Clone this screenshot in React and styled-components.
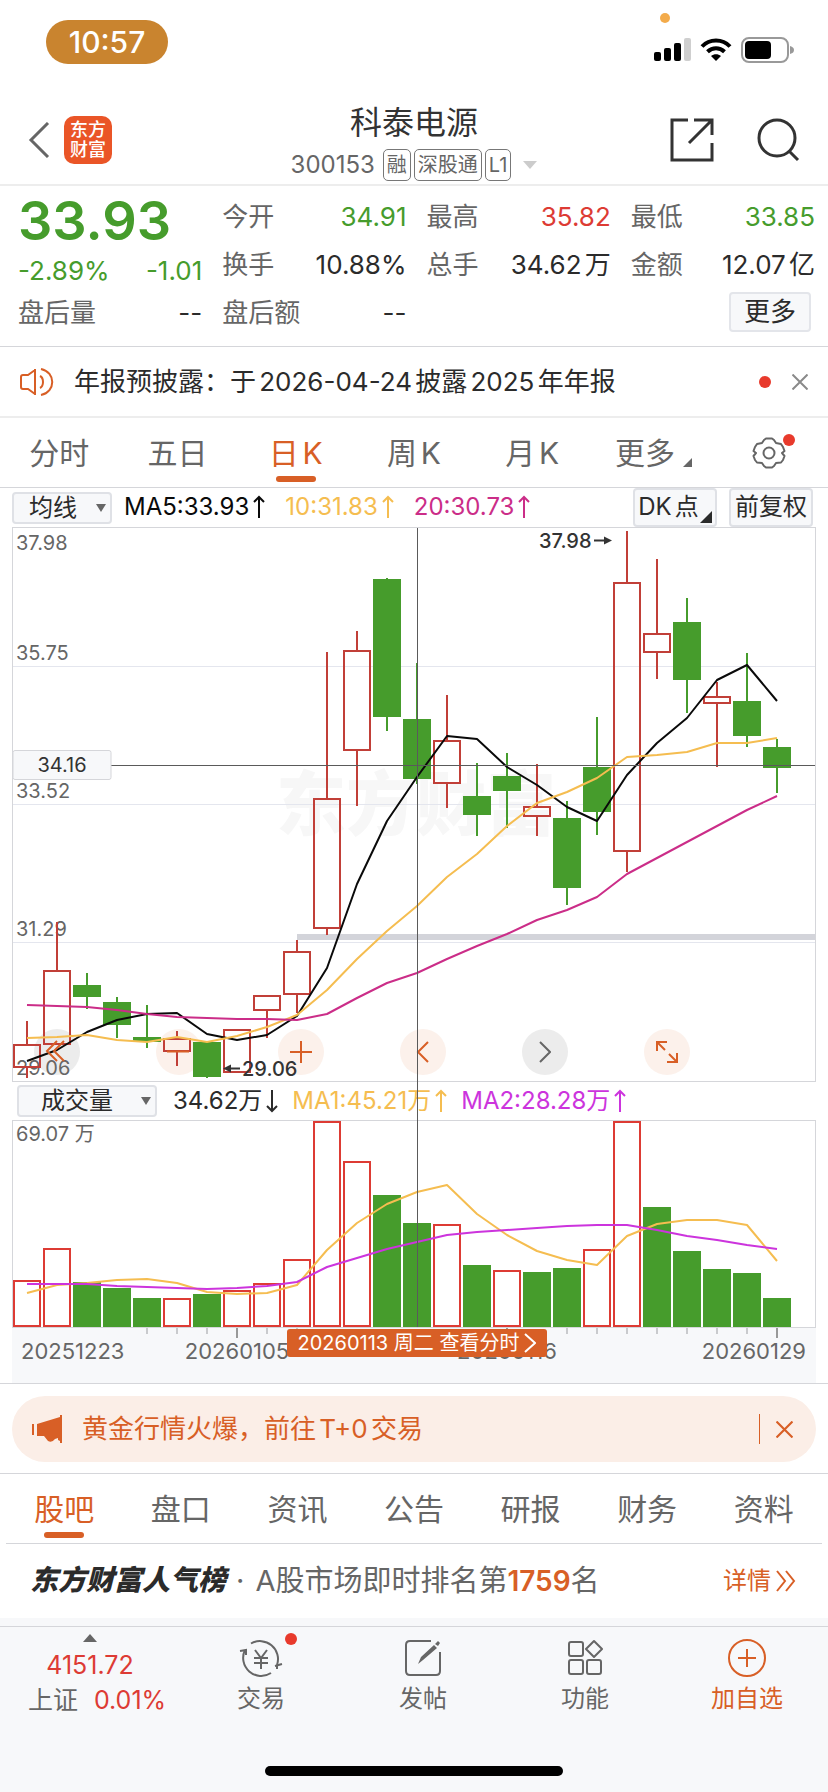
import React, { useState } from 'react';
import styled, { createGlobalStyle } from 'styled-components';

const c = {
  orange: '#d85f26',
  green: '#469c2c',
  red: '#dd3b34',
  candleRed: '#c13f38',
  yellow: '#f5bd50',
  magenta: '#cb2d88',
  purple: '#cc34dd',
  ink: '#2b2b2b',
  gray: '#666666',
  line: '#d5d6da',
  soft: '#ededed',
  panel: '#f7f8fa',
};

const Global = createGlobalStyle`
  * { box-sizing: border-box; }
  body { margin: 0; background: #fff; line-height: 1.2; }
  body, button, select {
    font-family: Inter, 'Noto Sans CJK SC', sans-serif;
    text-autospace: normal;
  }
  button { border: 0; background: none; padding: 0; margin: 0; color: inherit; font-size: inherit; line-height: inherit; cursor: pointer; }
  a { text-decoration: none; color: inherit; }
  h1, p { margin: 0; font-weight: 400; }
  svg { display: block; flex: none; }
`;

const Page = styled.main`
  min-height: 100vh;
  display: flex;
  flex-direction: column;
  color: ${c.ink};
  white-space: nowrap;
`;

/* status bar */
const StatusBar = styled.div`
  height: 84px;
  display: flex;
  align-items: center;
  justify-content: space-between;
  padding: 0 34px 0 46px;
  position: relative;
`;
const TimePill = styled.div`
  width: 122px;
  height: 44px;
  border-radius: 22px;
  background: #c9842f;
  color: #fff;
  font-size: 30px;
  font-weight: 500;
  line-height: 44px;
  text-align: center;
`;
const StatusIcons = styled.div`
  display: flex;
  align-items: center;
  gap: 9px;
  padding-top: 15px;
`;
const RecordDot = styled.span`
  position: absolute;
  top: 13px;
  right: 158px;
  width: 10px;
  height: 10px;
  border-radius: 5px;
  background: #f3ab4b;
`;

/* title bar */
const TitleBar = styled.header`
  display: grid;
  grid-template-columns: 1fr auto 1fr;
  height: 102px;
  padding: 0 28px;
  border-bottom: 2px solid ${c.soft};
`;
const BarSide = styled.div`
  display: flex;
  align-items: center;
  justify-content: ${(p) => (p.$end ? 'flex-end' : 'flex-start')};
  gap: ${(p) => (p.$end ? 42 : 14)}px;
  padding-top: 12px;
`;
const Logo = styled.span`
  width: 48px;
  height: 48px;
  border-radius: 10px;
  background: #ea5527;
  color: #fff;
  display: flex;
  flex-direction: column;
  align-items: center;
  justify-content: center;
  font-size: 18px;
  font-weight: 500;
  line-height: 20px;
`;
const TitleBlock = styled.div`
  display: flex;
  flex-direction: column;
  align-items: center;
  padding-top: 18px;
`;
const StockName = styled.h1`
  font-size: 32px;
  line-height: 42px;
  color: #333;
`;
const CodeRow = styled.div`
  display: flex;
  align-items: center;
  gap: 3px;
  margin-top: 5px;
  color: ${c.gray};
  font-size: 24px;
  line-height: 32px;
`;
const Tag = styled.span`
  height: 32px;
  padding: 0 3px;
  border: 1px solid #777;
  border-radius: 5px;
  font-size: 20px;
  line-height: 30px;
`;
const Triangle = styled.span`
  width: 0;
  height: 0;
  flex: none;
  border-left: ${(p) => p.$w}px solid transparent;
  border-right: ${(p) => p.$w}px solid transparent;
  ${(p) => (p.$up ? 'border-bottom' : 'border-top')}: ${(p) => p.$h}px solid ${(p) => p.$color};
`;
const Gap = styled.span`
  width: ${(p) => p.$w}px;
`;

/* quote */
const Quote = styled.section`
  display: grid;
  grid-template-columns: repeat(4, 1fr);
  column-gap: 20px;
  padding: 7px 13px 9px 18px;
  border-bottom: 1px solid ${c.line};
`;
const QuoteColumn = styled.div`
  display: flex;
  flex-direction: column;
`;
const BigPrice = styled.div`
  height: 56px;
  font-size: 54px;
  line-height: 56px;
  font-weight: 600;
  color: ${c.green};
`;
const QuoteRow = styled.div`
  display: flex;
  justify-content: space-between;
  align-items: center;
  height: ${(p) => p.$h || 48}px;
  font-size: 26px;
  color: ${(p) => p.$color || c.ink};
`;
const QuoteLabel = styled.span`
  color: ${c.gray};
`;
const MoreButton = styled.button`
  align-self: flex-end;
  width: 82px;
  height: 40px;
  margin: 3px 4px 0 0;
  border: 2px solid #e3e5ea;
  border-radius: 4px;
  background: ${c.panel};
  font-size: 26px;
`;

/* notice */
const Notice = styled.section`
  display: flex;
  align-items: center;
  height: 71px;
  padding: 0 20px;
  border-bottom: 2px solid ${c.soft};
  font-size: 26px;
`;
const NoticeText = styled.p`
  flex: 1;
  padding-left: 20px;
`;
const Dot = styled.span`
  width: 12px;
  height: 12px;
  border-radius: 6px;
  background: #e83a2c;
  flex: none;
`;
const CloseButton = styled.button`
  margin-left: ${(p) => p.$gap}px;
`;

/* tabs */
const Tabs = styled.nav`
  display: grid;
  grid-template-columns: repeat(7, 1fr);
  height: 70px;
  margin: 0 ${(p) => p.$inset || 0}px;
  border-bottom: 1px solid ${c.line};
`;
const Tab = styled.button`
  position: relative;
  display: flex;
  align-items: center;
  justify-content: center;
  font-size: 30px;
  color: ${(p) => (p.$active ? c.orange : c.gray)};
  &::after {
    content: '';
    display: ${(p) => (p.$active ? 'block' : 'none')};
    position: absolute;
    bottom: 5px;
    left: calc(50% - 20px);
    width: 40px;
    height: 6px;
    border-radius: 3px;
    background: ${c.orange};
  }
`;
const Corner = styled.span`
  width: 0;
  height: 0;
  flex: none;
  align-self: flex-end;
  border-left: ${(p) => p.$s}px solid transparent;
  border-bottom: ${(p) => p.$s}px solid ${(p) => p.$color};
  margin: ${(p) => p.$m};
`;
const BadgeDot = styled(Dot)`
  position: absolute;
  top: ${(p) => p.$top}px;
  left: calc(50% + ${(p) => p.$dx}px);
`;

/* indicator bars */
const IndicatorBar = styled.div`
  display: flex;
  align-items: center;
  height: ${(p) => p.$h}px;
  font-size: 24px;
`;
const SelectBox = styled.label`
  position: relative;
  display: flex;
  align-items: center;
  width: ${(p) => p.$w}px;
  margin-left: ${(p) => p.$ml || 0}px;
  select {
    appearance: none;
    width: 100%;
    height: 32px;
    padding: 0 0 0 ${(p) => p.$pad}px;
    border: 2px solid #dfe1e6;
    border-radius: 4px;
    background: ${c.panel};
    color: ${c.ink};
    font-size: 24px;
    line-height: 28px;
  }
  span {
    position: absolute;
    right: 6px;
    pointer-events: none;
  }
`;
const Reading = styled.span`
  display: flex;
  align-items: center;
  margin-left: ${(p) => p.$ml}px;
  color: ${(p) => p.$color};
  text-autospace: no-autospace;
  svg { margin-left: 4px; }
`;
const Spacer = styled.span`
  flex: 1;
`;
const ChipButton = styled.button`
  display: flex;
  align-items: center;
  justify-content: center;
  width: 84px;
  height: 39px;
  margin-right: ${(p) => p.$mr}px;
  border: 2px solid #dfe1e6;
  border-radius: 4px;
  background: ${c.panel};
  font-size: 24px;
`;

/* charts */
const ChartSection = styled.section`
  padding: 0 12px;
  border-bottom: 1px solid ${c.line};
`;
const Plots = styled.div`
  position: relative;
`;
const PlotBox = styled.div`
  position: relative;
  svg.plot {
    position: relative;
    width: 100%;
    height: auto;
    pointer-events: none;
  }
  svg.under {
    position: absolute;
    inset: 0;
  }
`;
const CrossLine = styled.span`
  position: absolute;
  top: 1px;
  bottom: 1px;
  left: 50.4%;
  width: 1px;
  background: #5a5a5a;
`;
const ToolRow = styled.div`
  position: absolute;
  left: 0;
  right: 0;
  bottom: 7px;
  display: flex;
  justify-content: space-between;
  padding: 0 126px 0 22px;
`;
const RoundButton = styled.button`
  width: 46px;
  height: 46px;
  border-radius: 23px;
  display: flex;
  align-items: center;
  justify-content: center;
  background: ${(p) => (p.$muted ? '#ececec' : '#fcf1eb')};
`;
const Axis = styled.div`
  position: relative;
  height: 55px;
  background: ${c.panel};
  svg.ticks { width: 100%; height: auto; }
`;
const DateTip = styled.button`
  position: absolute;
  top: 1px;
  left: 34.2%;
  width: 260px;
  height: 28px;
  display: flex;
  align-items: center;
  justify-content: center;
  gap: 5px;
  border-radius: 3px;
  background: ${c.orange};
  color: #fff;
  font-size: 20px;
  line-height: 28px;
`;

/* promo */
const PromoWrap = styled.section`
  padding: 12px 12px 11px;
  border-bottom: 1px solid ${c.line};
`;
const Promo = styled.div`
  display: flex;
  align-items: center;
  height: 66px;
  padding: 0 23px 0 20px;
  border-radius: 33px;
  background: #fbeee7;
  color: ${c.orange};
  font-size: 26px;
`;
const PromoLink = styled.a`
  flex: 1;
  padding-left: 19px;
`;
const Divider = styled.span`
  width: 1px;
  height: 30px;
  background: ${c.orange};
`;

/* rank */
const RankRow = styled.a`
  display: flex;
  align-items: center;
  height: 74px;
  padding: 0 32px 0 30px;
  font-size: 29px;
  color: ${c.gray};
  text-autospace: no-autospace;
`;
const RankTitle = styled.strong`
  font-size: 28px;
  font-style: italic;
  font-weight: 900;
  color: #2b2b2b;
`;
const RankNumber = styled.b`
  font-size: 28px;
  font-weight: 600;
  color: ${c.orange};
`;
const Detail = styled.span`
  display: flex;
  align-items: center;
  gap: 5px;
  margin-left: auto;
  font-size: 24px;
  color: ${c.orange};
`;

/* bottom bar */
const BottomArea = styled.footer`
  flex: 1;
  display: flex;
  flex-direction: column;
  justify-content: space-between;
  padding: 8px 0 16px;
  background: ${c.panel};
`;
const BottomBar = styled.nav`
  display: grid;
  grid-template-columns: 180px repeat(4, 1fr);
  border-top: 1px solid ${c.line};
`;
const BottomItem = styled.button`
  position: relative;
  display: flex;
  flex-direction: column;
  align-items: center;
  gap: 4px;
  padding-top: 12px;
  font-size: 24px;
  line-height: 36px;
  color: ${(p) => (p.$accent ? c.orange : c.gray)};
`;
const IndexItem = styled.button`
  display: flex;
  flex-direction: column;
  align-items: center;
  padding-top: 7px;
  font-size: 25px;
  line-height: 35px;
  color: ${c.gray};
  em { font-style: normal; color: ${c.red}; }
`;
const IndexLine = styled.span`
  display: flex;
  gap: 16px;
  padding-left: 14px;
`;
const IndexValue = styled.em`
  padding-top: 6px;
`;
const HomeIndicator = styled.span`
  align-self: center;
  width: 36%;
  height: 10px;
  border-radius: 5px;
  background: #000;
`;

const X = (i) => 15 + 30 * i;
/* [up, high, bodyTop, bodyBottom, low] in plot units */
const candles = [
  [1, 494, 517, 541, 551], [1, 395, 443, 518, 518], [0, 446, 458, 470, 482], [0, 470, 475, 498, 511],
  [0, 478, 510, 515, 521], [1, 504, 511, 525, 539], [0, 514, 515, 550, 551], [1, 502, 502, 546, 546],
  [1, 468, 468, 484, 511], [1, 413, 424, 468, 486], [1, 125, 271, 402, 408], [1, 104, 123, 224, 279],
  [0, 51, 52, 190, 204], [0, 136, 192, 252, 257], [1, 168, 213, 257, 281], [0, 236, 269, 288, 309],
  [0, 226, 249, 264, 301], [1, 237, 279, 290, 309], [0, 274, 291, 361, 378], [0, 190, 240, 285, 308],
  [1, 4, 55, 325, 345], [1, 32, 106, 126, 152], [0, 71, 95, 153, 186], [1, 155, 169, 177, 240],
  [0, 126, 174, 209, 220], [0, 212, 220, 241, 266],
];
const ma5 = [534, 523, 505, 493, 487, 486, 507, 513, 508, 489, 441, 357, 294, 250, 209, 212, 240, 258, 280, 294, 248, 216, 191, 153, 138, 174];
const ma10 = [511, 510, 508, 513, 515, 510, 515, 509, 500, 488, 463, 432, 404, 379, 350, 327, 299, 276, 265, 251, 230, 228, 225, 216, 216, 211];
const ma20 = [478, 479, 480, 483, 487, 490, 491, 492, 492, 493, 487, 471, 456, 446, 432, 419, 407, 393, 383, 370, 347, 331, 315, 299, 283, 269];
const volumes = [
  [1, 160], [1, 128], [0, 162], [0, 168], [0, 178], [1, 178], [0, 174], [1, 170], [1, 163], [1, 139], [1, 1], [1, 41], [0, 75],
  [0, 103], [1, 104], [0, 145], [1, 150], [0, 152], [0, 148], [1, 129], [1, 1], [0, 87], [0, 131], [0, 149], [0, 153], [0, 178],
];
const volMa1 = [173, 165, 163, 160, 159, 163, 172, 174, 173, 165, 130, 103, 84, 72, 65, 94, 115, 131, 140, 145, 116, 104, 100, 100, 105, 141];
const volMa2 = [164, 164, 164, 166, 167, 168, 169, 168, 166, 162, 147, 138, 129, 122, 115, 112, 110, 108, 106, 105, 105, 110, 116, 120, 125, 129];

const Trend = ({ data, color }) => (
  <polyline points={data.map((y, i) => `${X(i)},${y}`).join(' ')} fill="none" stroke={color} strokeWidth="2" strokeLinejoin="round" />
);

const Bar = ({ up, x, top, bottom, red }) =>
  up ? (
    <rect x={x - 13} y={top + 1} width="26" height={Math.max(bottom - top - 2, 1)} fill="none" stroke={red} strokeWidth="2" />
  ) : (
    <rect x={x - 14} y={top} width="28" height={bottom - top} fill={c.green} />
  );

const AxisText = (p) => <text fontFamily="Inter, 'Noto Sans CJK SC', sans-serif" fontSize="20" fill={c.gray} {...p} />;

const PricePlot = () => (
  <svg className="plot" viewBox="0 0 804 555" role="img" aria-label="日K线图">
    <g stroke="#e4e6ee" strokeWidth="1">
      <path d="M0 139.500H804M0 277.500H804M0 415.500H804" />
    </g>
    <rect x="0.500" y="0.500" width="803" height="554" fill="none" stroke={c.line} />
    <rect x="285" y="407" width="518" height="6" fill="#d3d4da" />
    <AxisText x="4" y="23">37.98</AxisText>
    <AxisText x="4" y="133">35.75</AxisText>
    <AxisText x="4" y="271">33.52</AxisText>
    <AxisText x="4" y="409">31.29</AxisText>
    <AxisText x="4" y="548">29.06</AxisText>
    {candles.map(([up, h, t, b, l], i) => (
      <g key={i}>
        <path d={`M${X(i)} ${h}V${t}M${X(i)} ${b}V${l}`} stroke={up ? c.candleRed : c.green} strokeWidth="2" />
        <Bar up={up} x={X(i)} top={t} bottom={b} red={c.candleRed} />
      </g>
    ))}
    <Trend data={ma5} color="#0a0a0a" />
    <Trend data={ma10} color={c.yellow} />
    <Trend data={ma20} color={c.magenta} />
    <g fill="none" stroke={c.orange} strokeWidth="2">
      <path d="M45 514L35 524L45 534M52 514L42 524L52 534M155 524.500H177" />
    </g>
    <AxisText x="527" y="21" fill="#333" fontWeight="500">37.98</AxisText>
    <path d="M582 13.500H593" stroke="#333" strokeWidth="2" />
    <path d="M592 9.500L600 13.500L592 17.500Z" fill="#333" />
    <AxisText x="230" y="549" fill="#333" fontWeight="500">29.06</AxisText>
    <path d="M218 541.500H228" stroke="#333" strokeWidth="2" />
    <path d="M219 537.500L211 541.500L219 545.500Z" fill="#333" />
    <path d="M99 238.500H803" stroke="#5a5a5a" />
    <rect x="1" y="223.500" width="98" height="29" rx="2" fill={c.panel} stroke={c.line} />
    <AxisText x="50" y="245" fill="#333" textAnchor="middle">34.16</AxisText>
  </svg>
);

const Watermark = () => (
  <svg className="plot under" viewBox="0 0 804 555" aria-hidden="true">
    <text x="264" y="303" fontFamily="'Noto Sans CJK SC', sans-serif" fontWeight="900" fontSize="70" fill="#f7f7f7">东方财富</text>
  </svg>
);

const VolumePlot = () => (
  <svg className="plot" viewBox="0 0 804 208" role="img" aria-label="成交量图">
    <rect x="0.500" y="0.500" width="803" height="207" fill="none" stroke={c.line} />
    <AxisText x="4" y="21">69.07 万</AxisText>
    {volumes.map(([up, t], i) => (
      <Bar key={i} up={up} x={X(i)} top={t} bottom={207} red={c.red} />
    ))}
    <Trend data={volMa1} color={c.yellow} />
    <Trend data={volMa2} color={c.purple} />
  </svg>
);

const AxisTicks = () => (
  <svg className="ticks" viewBox="0 0 804 40" aria-hidden="true">
    {[4, 5, 6, 8, 9, 18, 19, 20, 21, 22, 23, 24].map((i) => (
      <path key={i} d={`M${X(i)} 0v6`} stroke="#c9cacd" strokeWidth="2" />
    ))}
    {[7, 16, 25].map((i) => (
      <path key={i} d={`M${X(i)} 0v10`} stroke="#999" strokeWidth="2" />
    ))}
    <AxisText x="9" y="31" fontSize="22">20251223</AxisText>
    <AxisText x="225" y="31" fontSize="22" textAnchor="middle">20260105</AxisText>
    <AxisText x="495" y="31" fontSize="22" textAnchor="middle">20260116</AxisText>
    <AxisText x="794" y="31" fontSize="22" textAnchor="end">20260129</AxisText>
  </svg>
);

const Arrow = ({ down }) => (
  <svg width="12" height="24" viewBox="0 0 12 24" fill="none" stroke="currentColor" strokeWidth="2">
    {down ? <path d="M6 1V22M1 17L6 22L11 17" /> : <path d="M6 23V2M1 7L6 2L11 7" />}
  </svg>
);

const Icon = ({ w, h, children, sw = 2 }) => (
  <svg width={w} height={h} viewBox={`0 0 ${w} ${h}`} fill="none" stroke="currentColor" strokeWidth={sw} aria-hidden="true">
    {children}
  </svg>
);

const Cross = ({ s = 16, color }) => (
  <svg width={s} height={s} viewBox="0 0 16 16" fill="none" stroke={color} strokeWidth="2">
    <path d="M0.500 0.500L15.500 15.500M15.500 0.500L0.500 15.500" />
  </svg>
);

const periods = ['分时', '五日', '日K', '周K', '月K'];
const sections = ['股吧', '盘口', '资讯', '公告', '研报', '财务', '资料'];

const QuoteLine = ({ label, value, color }) => (
  <QuoteRow $color={color}>
    <QuoteLabel>{label}</QuoteLabel>
    <span>{value}</span>
  </QuoteRow>
);

export default function App() {
  const [period, setPeriod] = useState('日K');
  const [section, setSection] = useState('股吧');
  return (
    <Page>
      <Global />
      <StatusBar>
        <TimePill>10:57</TimePill>
        <RecordDot />
        <StatusIcons>
          <svg width="37" height="24" viewBox="0 0 37 24">
            <rect x="0" y="14" width="7" height="9" rx="2" />
            <rect x="10" y="10" width="7" height="13" rx="2" />
            <rect x="20" y="5" width="7" height="18" rx="2" />
            <rect x="30" y="0" width="7" height="23" rx="2" fill="#cfcfcf" />
          </svg>
          <svg width="32" height="24" viewBox="0 0 32 24" fill="none" stroke="#000" strokeWidth="4">
            <path d="M2 8.500C9.500 0.500 22.500 0.500 30 8.500" />
            <path d="M7.500 13.800C12.500 9 19.500 9 24.500 13.800" />
            <path d="M16 23L11 18C14 15.500 18 15.500 21 18Z" fill="#000" stroke="none" />
          </svg>
          <svg width="53" height="26" viewBox="0 0 53 26">
            <rect x="1" y="1" width="46" height="24" rx="7" fill="none" stroke="#999" strokeWidth="2" />
            <rect x="4" y="4" width="26" height="18" rx="4" />
            <path d="M49 9C52 10 53 11 53 13S52 16 49 17Z" fill="#999" />
          </svg>
        </StatusIcons>
      </StatusBar>

      <TitleBar>
        <BarSide>
          <button aria-label="返回">
            <Icon w={22} h={36} sw={3}><path d="M20 1L3 18L20 35" stroke="#666" /></Icon>
          </button>
          <Logo><span>东方</span><span>财富</span></Logo>
        </BarSide>
        <TitleBlock>
          <StockName>科泰电源</StockName>
          <CodeRow>
            <span>300153</span>
            <Gap $w={2} />
            <Tag>融</Tag>
            <Tag>深股通</Tag>
            <Tag>L1</Tag>
            <Gap $w={6} />
            <Triangle $w={7} $h={8} $color="#ccc" />
          </CodeRow>
        </TitleBlock>
        <BarSide $end>
          <button aria-label="分享">
            <Icon w={44} h={44} sw={3}>
              <path d="M18 2H2V42H42V25M24 2H42V17M41 3L19 25" stroke="#333" />
            </Icon>
          </button>
          <button aria-label="搜索">
            <Icon w={44} h={44} sw={3}>
              <circle cx="21" cy="20" r="18" stroke="#333" />
              <path d="M33 33L42 42" stroke="#333" />
            </Icon>
          </button>
        </BarSide>
      </TitleBar>

      <Quote>
        <QuoteColumn>
          <BigPrice>33.93</BigPrice>
          <QuoteRow $color={c.green} $h={44}><span>-2.89%</span><span>-1.01</span></QuoteRow>
          <QuoteRow $h={40}><QuoteLabel>盘后量</QuoteLabel><span>--</span></QuoteRow>
        </QuoteColumn>
        <QuoteColumn>
          <QuoteLine label="今开" value="34.91" color={c.green} />
          <QuoteLine label="换手" value="10.88%" />
          <QuoteLine label="盘后额" value="--" />
        </QuoteColumn>
        <QuoteColumn>
          <QuoteLine label="最高" value="35.82" color={c.red} />
          <QuoteLine label="总手" value="34.62万" />
        </QuoteColumn>
        <QuoteColumn>
          <QuoteLine label="最低" value="33.85" color={c.green} />
          <QuoteLine label="金额" value="12.07亿" />
          <MoreButton>更多</MoreButton>
        </QuoteColumn>
      </Quote>

      <Notice>
        <Icon w={34} h={28}>
          <path d="M15 1V27M15 2L8 7H3Q1 7 1 9V19Q1 21 3 21H8L15 26M20 8C24 10 24 18 20 20M21 1C36 4 36 24 21 27" stroke={c.orange} />
        </Icon>
        <NoticeText>年报预披露：于2026-04-24披露2025年年报</NoticeText>
        <Dot />
        <CloseButton $gap={21} aria-label="关闭"><Cross color="#8a8a8a" /></CloseButton>
      </Notice>

      <Tabs>
        {periods.map((p) => (
          <Tab key={p} $active={p === period} onClick={() => setPeriod(p)}>{p}</Tab>
        ))}
        <Tab>更多<Corner $s={9} $color={c.gray} $m="0 -6px 20px 8px" /></Tab>
        <Tab aria-label="设置">
          <Icon w={34} h={32}>
            <path d="M12 3L14 1.500H20L22 3L24 6L29 7L31 10L32.500 14L30 16L32.500 19L31 23L29 25.500L24 26L22 29L20 30.500H14L12 29L10 26L5 25.500L3 23L1.500 19L4 16L1.500 14L3 10L5 7L10 6Z" strokeLinejoin="round" />
            <circle cx="17" cy="16" r="5.500" />
          </Icon>
          <BadgeDot $top={16} $dx={14} />
        </Tab>
      </Tabs>

      <ChartSection>
        <IndicatorBar $h={39}>
          <SelectBox $w={100} $pad={15}>
            <select aria-label="主图指标" defaultValue="均线"><option>均线</option></select>
            <Triangle $w={5} $h={8} $color="#666" />
          </SelectBox>
          <Reading $ml={12} $color="#0a0a0a">MA5:33.93<Arrow /></Reading>
          <Reading $ml={20} $color={c.yellow}>10:31.83<Arrow /></Reading>
          <Reading $ml={20} $color={c.magenta}>20:30.73<Arrow /></Reading>
          <Spacer />
          <ChipButton $mr={12}>DK点<Corner $s={12} $color="#2b2b2b" $m="0 0 2px 1px" /></ChipButton>
          <ChipButton $mr={3}>前复权</ChipButton>
        </IndicatorBar>
        <Plots>
          <PlotBox>
            <Watermark />
            <ToolRow>
              <RoundButton $muted aria-label="最左" />
              <RoundButton aria-label="缩小" />
              <RoundButton aria-label="放大">
                <Icon w={24} h={24}><path d="M1 12H23M12 1V23" stroke={c.orange} /></Icon>
              </RoundButton>
              <RoundButton aria-label="左移">
                <Icon w={14} h={22}><path d="M12 1L2 11L12 21" stroke={c.orange} /></Icon>
              </RoundButton>
              <RoundButton $muted aria-label="右移">
                <Icon w={12} h={22}><path d="M1 1L11 11L1 21" stroke="#666" /></Icon>
              </RoundButton>
              <RoundButton aria-label="全屏">
                <Icon w={24} h={24}><path d="M2 11V2H12M2 2L10 10M22 13V22H12M22 22L14 14" stroke={c.orange} /></Icon>
              </RoundButton>
            </ToolRow>
            <PricePlot />
          </PlotBox>
          <IndicatorBar $h={38}>
            <SelectBox $w={140} $ml={5} $pad={22}>
              <select aria-label="副图指标" defaultValue="成交量"><option>成交量</option></select>
              <Triangle $w={5} $h={8} $color="#666" />
            </SelectBox>
            <Reading $ml={16} $color={c.ink}>34.62万<Arrow down /></Reading>
            <Reading $ml={14} $color={c.yellow}>MA1:45.21万<Arrow /></Reading>
            <Reading $ml={14} $color={c.purple}>MA2:28.28万<Arrow /></Reading>
          </IndicatorBar>
          <PlotBox><VolumePlot /></PlotBox>
          <CrossLine />
        </Plots>
        <Axis>
          <AxisTicks />
          <DateTip>
            20260113 周二 查看分时
            <Icon w={12} h={20}><path d="M1 1L11 10L1 19" /></Icon>
          </DateTip>
        </Axis>
      </ChartSection>

      <PromoWrap>
        <Promo>
          <svg width="31" height="28" viewBox="0 0 31 28" fill={c.orange}>
            <path d="M0 9H2V20H0ZM5 9L28 2V0H30V28H28V26L26 25V23L23 24Q20 28 16 26L12 21H5Z" />
          </svg>
          <PromoLink href="#gold">黄金行情火爆，前往T+0交易</PromoLink>
          <Divider />
          <CloseButton $gap={16} aria-label="关闭"><Cross s={17} color={c.orange} /></CloseButton>
        </Promo>
      </PromoWrap>

      <Tabs $inset={6}>
        {sections.map((s) => (
          <Tab key={s} $active={s === section} onClick={() => setSection(s)}>{s}</Tab>
        ))}
      </Tabs>

      <RankRow href="#rank">
        <RankTitle>东方财富人气榜</RankTitle>
        <Gap $w={10} />·<Gap $w={11} />
        <span>A股市场即时排名第<RankNumber>1759</RankNumber>名</span>
        <Detail>
          详情
          <Icon w={20} h={22}><path d="M1 1L9 11L1 21M10 1L18 11L10 21" /></Icon>
        </Detail>
      </RankRow>

      <BottomArea>
        <BottomBar>
          <IndexItem>
            <Triangle $up $w={7} $h={8} $color="#666" />
            <IndexValue>4151.72</IndexValue>
            <IndexLine>上证<em>0.01%</em></IndexLine>
          </IndexItem>
          <BottomItem>
            <Icon w={44} h={38}>
              <path d="M12 4.500A18 18 0 0 1 38 26M36 27L43 25M38 26L38 30M32 34A18 18 0 0 1 6 11M1 12L7 11L7 16" />
              <path d="M16 11L22 19L28 11M15 19H29M15 24H29M22 19V30" />
            </Icon>
            交易
            <BadgeDot $top={6} $dx={24} />
          </BottomItem>
          <BottomItem>
            <Icon w={38} h={38}>
              <path d="M27 2H6Q2 2 2 6V32Q2 36 6 36H32Q36 36 36 32V13" />
              <path d="M14 25L17 18L30 6L33 9L19 21ZM31 5L34 2L36 4L34 7Z" fill={c.gray} stroke="none" />
            </Icon>
            发帖
          </BottomItem>
          <BottomItem>
            <Icon w={36} h={38}>
              <rect x="2" y="3" width="14" height="14" rx="2" />
              <rect x="2" y="21" width="14" height="14" rx="2" />
              <rect x="20" y="21" width="14" height="14" rx="2" />
              <path d="M27 2L35 10L27 18L19 10Z" strokeLinejoin="round" />
            </Icon>
            功能
          </BottomItem>
          <BottomItem $accent>
            <Icon w={38} h={38}><circle cx="19" cy="19" r="18" /><path d="M10 19H28M19 10V28" /></Icon>
            加自选
          </BottomItem>
        </BottomBar>
        <HomeIndicator />
      </BottomArea>
    </Page>
  );
}
